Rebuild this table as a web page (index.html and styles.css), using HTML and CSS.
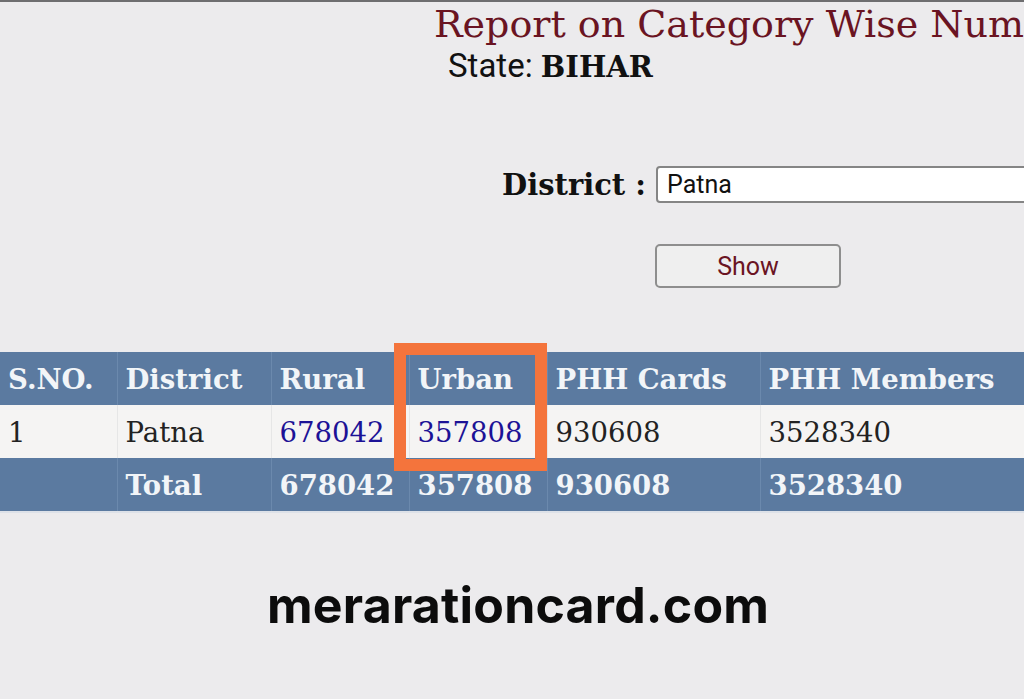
FILE: index.html
```html
<!DOCTYPE html>
<html>
<head>
<meta charset="utf-8">
<link rel="stylesheet" href="styles.css">
</head>
<body>
<div class="page">
  <header class="head">
    <h1 class="title">Report on Category Wise Numbers</h1>
    <div class="state">State: <b>BIHAR</b></div>
  </header>
  <form class="filter">
    <div class="field">
      <label class="field-label">District :</label>
      <div class="select">Patna</div>
    </div>
    <div class="actions">
      <button type="button" class="btn">Show</button>
    </div>
  </form>
  <div class="table-wrap">
    <table class="report">
      <thead>
        <tr>
          <th class="c1">S.NO.</th>
          <th class="c2">District</th>
          <th class="c3">Rural</th>
          <th class="c4">Urban</th>
          <th class="c5">PHH Cards</th>
          <th class="c6">PHH Members</th>
        </tr>
      </thead>
      <tbody>
        <tr class="row">
          <td>1</td>
          <td>Patna</td>
          <td><a class="link">678042</a></td>
          <td><a class="link">357808</a></td>
          <td>930608</td>
          <td>3528340</td>
        </tr>
      </tbody>
      <tfoot>
        <tr>
          <td></td>
          <td>Total</td>
          <td>678042</td>
          <td>357808</td>
          <td>930608</td>
          <td>3528340</td>
        </tr>
      </tfoot>
    </table>
    <div class="highlight"></div>
  </div>
  <div class="brand">merarationcard.com</div>
</div>
</body>
</html>
```
FILE: styles.css
```css
html, body {
  margin: 0;
  padding: 0;
  background: #ecebed;
  overflow: hidden;
}
body {
  width: 1024px;
  height: 699px;
}
.page {
  border-top: 2px solid #6e6e70;
  display: flex;
  flex-direction: column;
}
.head {
  padding-left: 434px;
  white-space: nowrap;
}
.title {
  margin: 0;
  font-family: "DejaVu Serif", serif;
  font-weight: normal;
  font-size: 38px;
  line-height: 44px;
  color: #6a1422;
  letter-spacing: 0;
}
.state {
  margin-left: 14px;
  font-family: Roboto, "Noto Sans", sans-serif;
  font-size: 33px;
  line-height: 40px;
  color: #111;
}
.state b {
  font-family: "DejaVu Serif", serif;
  font-size: 29px;
}
.filter {
  margin: 79px 0 0 0;
  display: flex;
  flex-direction: column;
  gap: 41px;
}
.field {
  display: flex;
  align-items: center;
  padding-left: 502px;
  gap: 10px;
  white-space: nowrap;
}
.field-label {
  font-family: "DejaVu Serif", serif;
  font-weight: bold;
  font-size: 29px;
  color: #111;
}
.select {
  box-sizing: border-box;
  width: 420px;
  height: 37px;
  background: #fff;
  border: 2px solid #858585;
  border-radius: 4px;
  padding-left: 9px;
  font-family: Roboto, "Noto Sans", sans-serif;
  font-size: 25px;
  line-height: 33px;
  color: #111;
  flex-shrink: 0;
}
.actions {
  padding-left: 655px;
}
.btn {
  box-sizing: border-box;
  width: 186px;
  height: 44px;
  background: #efefef;
  border: 2px solid #8e8e8e;
  border-radius: 5px;
  font-family: Roboto, "Noto Sans", sans-serif;
  font-size: 25px;
  color: #6a1422;
  padding: 0;
}
.table-wrap {
  position: relative;
  margin-top: 64px;
  border-bottom: 2px solid #dde1e8;
  width: 1024px;
  overflow: visible;
}
.report {
  border-collapse: collapse;
  table-layout: fixed;
  width: 1100px;
  font-family: "DejaVu Serif", serif;
  font-size: 27.5px;
}
.report th, .report td {
  height: 53px;
  padding: 0 0 0 8px;
  text-align: left;
  white-space: nowrap;
  box-sizing: border-box;
}
.report thead th, .report tfoot td {
  background: #5b7aa0;
  color: #f2f5f8;
  font-weight: bold;
  border-left: 1px solid #6b89ad;
}
.report thead th:first-child, .report tfoot td:first-child {
  border-left: none;
}
.report .row td {
  background: #f5f4f3;
  color: #222;
  border-left: 1px solid #e6e6e6;
}
.report .row td:first-child { border-left: none; }
.c1 { width: 117px; }
.c2 { width: 154px; }
.c3 { width: 138px; }
.c4 { width: 138px; }
.c5 { width: 213px; }
.c6 { width: 340px; }
.link {
  color: #1c1296;
}
.highlight {
  position: absolute;
  left: 394px;
  top: -9px;
  width: 153px;
  height: 128px;
  box-sizing: border-box;
  border: 12px solid #f4743c;
}
.brand {
  margin-top: 62px;
  padding-left: 267px;
  font-family: Inter, "Liberation Sans", sans-serif;
  font-weight: bold;
  font-size: 50px;
  line-height: 60px;
  color: #0c0c0c;
  letter-spacing: 0.2px;
}
```
